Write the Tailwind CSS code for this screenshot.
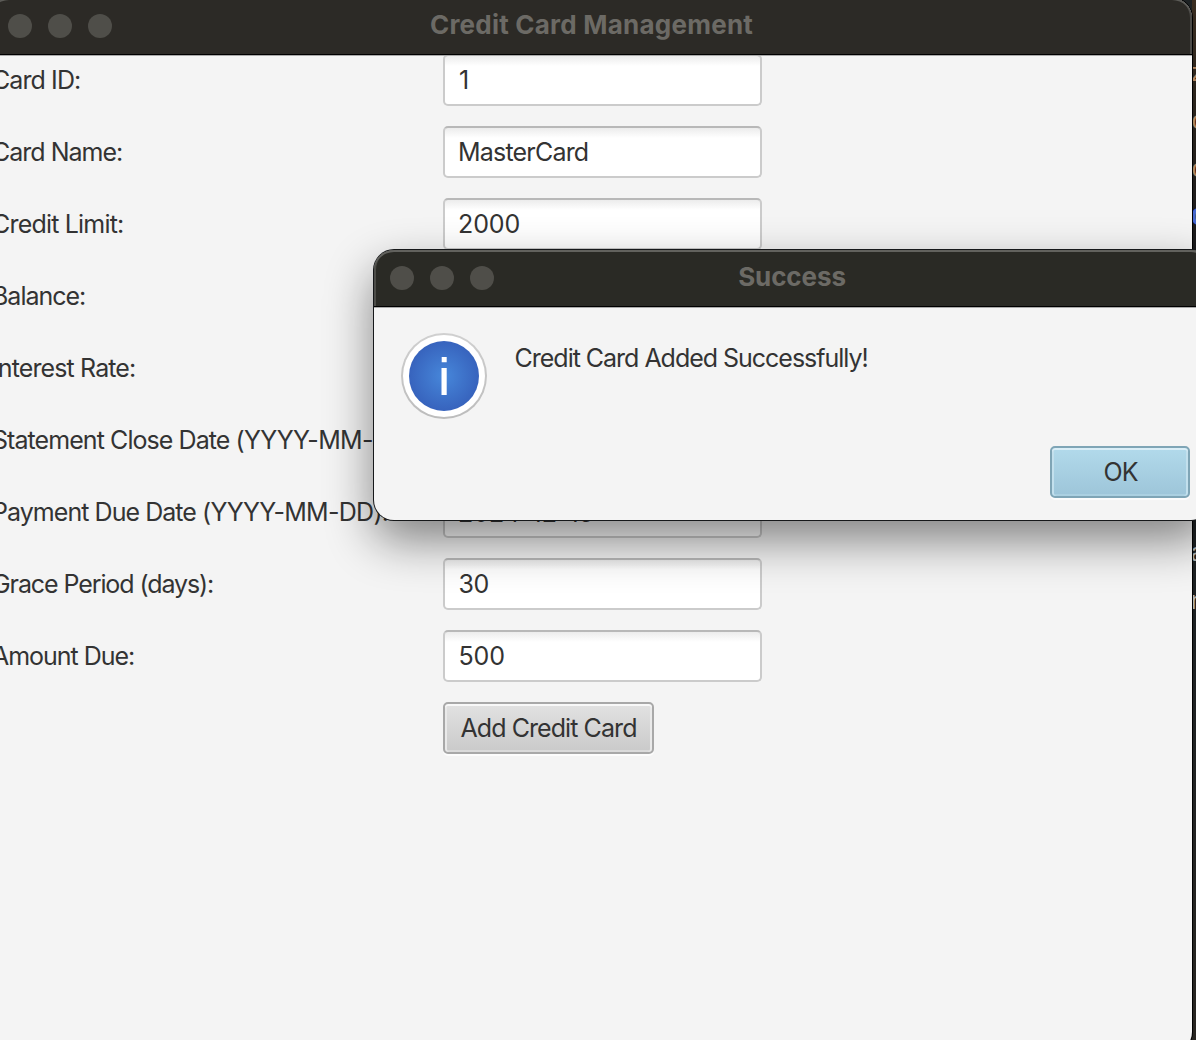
<!DOCTYPE html>
<html lang="en">
<head>
<meta charset="utf-8">
<title>Credit Card Management</title>
<script src="https://cdn.jsdelivr.net/npm/@tailwindcss/browser@4"></script>
</head>
<body class="relative h-[1040px] w-[1196px] overflow-hidden bg-[#1d2123] font-['Inter',sans-serif] text-[25px] text-[#333]">

  <!-- Editor behind the windows -->
  <div class="absolute top-0 right-0 h-[250px] w-[4px] overflow-hidden bg-linear-to-b from-[#3a2d20] via-[#27221c] to-[#1a1a1c] font-['Liberation_Mono',monospace] text-[26px] leading-[48px] text-[#b08560]">
    <div class="mt-[50px] -ml-[2px]">z</div>
    <div class="-ml-px">c</div>
    <div class="-ml-px">c</div>
    <div class="-ml-px font-bold text-[#4668d0]">C</div>
  </div>
  <div class="absolute top-[530px] right-0 h-[510px] w-[4px] overflow-hidden bg-linear-to-b from-[#1d2123] from-20% to-[#282521] font-['Liberation_Mono',monospace] text-[26px] leading-[48px] text-[#b0b3b3]">
    <div class="-ml-[2px]">a</div>
    <div class="-ml-[2px]">n</div>
  </div>

  <!-- Main window -->
  <main class="absolute -top-[2px] -left-[11px] h-[1054px] w-[1203px] overflow-hidden rounded-[20px] bg-[#f4f4f4] shadow-[0_0_0_1px_#000]">
    <header class="relative z-10 flex h-[56px] items-center justify-center rounded-t-[20px] bg-[#2c2a26] shadow-[0_1px_0_#000,0_2px_0_#aaa,inset_0_2px_0_#5c5b57,inset_-2px_0_0_#4c4b48]">
      <div class="absolute top-[16px] left-[19px] flex gap-4">
        <span class="size-6 rounded-full bg-[#4f4e49]"></span>
        <span class="size-6 rounded-full bg-[#4f4e49]"></span>
        <span class="size-6 rounded-full bg-[#4f4e49]"></span>
      </div>
      <h1 class="pb-[2px] pl-[2px] text-[26px] leading-8 font-bold tracking-[0.23px] text-[#6c6a65]">Credit Card Management</h1>
    </header>

    <form class="grid auto-rows-[52px] grid-cols-[451px_319px] gap-y-5 pl-[3px] leading-[52px] whitespace-nowrap">
      <span class="tracking-[-0.91px]">Card ID:</span>
      <div class="rounded-[5px] border-2 border-[#cbcbcb] border-t-[#b8b8b8] bg-linear-to-b from-[#ececec] to-white to-[10px] pl-[14px] leading-[48px]">1</div>
      <span class="tracking-[-1px]">Card Name:</span>
      <div class="rounded-[5px] border-2 border-[#cbcbcb] border-t-[#b8b8b8] bg-linear-to-b from-[#ececec] to-white to-[10px] pl-[13px] leading-[48px] tracking-[-0.8px]">MasterCard</div>
      <span class="tracking-[-0.81px]">Credit Limit:</span>
      <div class="rounded-[5px] border-2 border-[#cbcbcb] border-t-[#b8b8b8] bg-linear-to-b from-[#ececec] to-white to-[10px] pl-[13px] leading-[48px] tracking-[-0.1px]">2000</div>
      <span class="tracking-[-1px]">Balance:</span>
      <div class="rounded-[5px] border-2 border-[#cbcbcb] border-t-[#b8b8b8] bg-linear-to-b from-[#ececec] to-white to-[10px]"></div>
      <span class="tracking-[-0.88px]">Interest Rate:</span>
      <div class="rounded-[5px] border-2 border-[#cbcbcb] border-t-[#b8b8b8] bg-linear-to-b from-[#ececec] to-white to-[10px]"></div>
      <span><span class="tracking-[-0.93px]">Statement Close Date </span><span class="tracking-[-0.65px]">(YYYY-MM-DD):</span></span>
      <div class="rounded-[5px] border-2 border-[#cbcbcb] border-t-[#b8b8b8] bg-linear-to-b from-[#ececec] to-white to-[10px]"></div>
      <span><span class="tracking-[-0.95px]">Payment Due Date </span><span class="tracking-[-0.72px]">(YYYY-MM-DD):</span></span>
      <div class="rounded-[5px] border-2 border-[#cbcbcb] border-t-[#b8b8b8] bg-linear-to-b from-[#ececec] to-white to-[10px] pl-[13px] leading-[50px]">2024-12-15</div>
      <span class="tracking-[-1.09px]">Grace Period (days):</span>
      <div class="rounded-[5px] border-2 border-[#cbcbcb] border-t-[#b8b8b8] bg-linear-to-b from-[#ececec] to-white to-[10px] pl-[13.5px] leading-[48px] tracking-[-0.5px]">30</div>
      <span class="tracking-[-1.03px]">Amount Due:</span>
      <div class="rounded-[5px] border-2 border-[#cbcbcb] border-t-[#b8b8b8] bg-linear-to-b from-[#ececec] to-white to-[10px] pl-[13.5px] leading-[48px] tracking-[-0.1px]">500</div>
      <button type="button" class="col-start-2 w-[211px] rounded-[5px] border-2 border-[#a8a8a8] bg-linear-to-b from-[#e2e2e2] to-[#cacaca] leading-[48px] tracking-[-0.92px] shadow-[0_2px_0_#fcfcfc,inset_0_2px_0_#f8f8f8,inset_2px_0_0_#e9e9e9,inset_-2px_0_0_#e9e9e9,inset_0_-2px_0_#dadada]">Add Credit Card</button>
    </form>
  </main>

  <!-- Alert dialog -->
  <section class="absolute top-[250px] left-[374px] flex h-[270px] w-[837px] flex-col rounded-[20px] bg-[#f4f4f4] shadow-[0_0_0_1px_#16181a,0_20px_48px_rgba(0,0,0,0.48)]">
    <header class="relative z-10 flex h-[56px] shrink-0 items-center justify-center rounded-t-[20px] bg-[#2a2a25] shadow-[0_1px_0_#000,0_2px_0_#aaa,inset_0_2px_0_#62625e,inset_2px_0_0_#4c4c48]">
      <div class="absolute top-[16px] left-[16px] flex gap-4">
        <span class="size-6 rounded-full bg-[#4f4e49]"></span>
        <span class="size-6 rounded-full bg-[#4f4e49]"></span>
        <span class="size-6 rounded-full bg-[#4f4e49]"></span>
      </div>
      <h2 class="pr-px pb-[2px] text-[26px] leading-8 font-bold tracking-[-0.1px] text-[#6c6a65]">Success</h2>
    </header>
    <div class="flex pt-[26px] pl-[26px]">
      <svg class="size-[88px] shrink-0" viewBox="0 0 88 88">
        <defs>
          <radialGradient id="blue"><stop offset="0" stop-color="#4787da"/><stop offset="1" stop-color="#3763bd"/></radialGradient>
          <linearGradient id="ring" x2="0" y2="1"><stop offset="0" stop-color="#d0d0d0"/><stop offset="1" stop-color="#bcbcbc"/></linearGradient>
        </defs>
        <circle cx="44" cy="44" r="43" fill="url(#ring)"/>
        <circle cx="44" cy="44" r="41" fill="#fff"/>
        <circle cx="44" cy="44" r="35" fill="url(#blue)"/>
        <path d="M41.7 25h5v5.2h-5zM41.5 36h5.2v27h-5.2z" fill="#fff"/>
      </svg>
      <p class="pl-[26.6px] leading-[52px] tracking-[-1.02px]">Credit Card Added Successfully!</p>
    </div>
    <div class="mt-[26px] flex justify-end pr-[21px]">
      <button type="button" class="h-[52px] w-[140px] rounded-[5px] border-2 border-[#7fa5b6] bg-linear-to-b from-[#b2daeb] to-[#9dc5d9] pl-px leading-[48px] shadow-[0_2px_0_#fcfcfc,inset_0_2px_0_#daeef7,inset_2px_0_0_#c3e0ed,inset_-2px_0_0_#c3e0ed,inset_0_-2px_0_#abd0e1]"><span class="tracking-[-0.9px]">OK</span></button>
    </div>
  </section>
</body>
</html>
